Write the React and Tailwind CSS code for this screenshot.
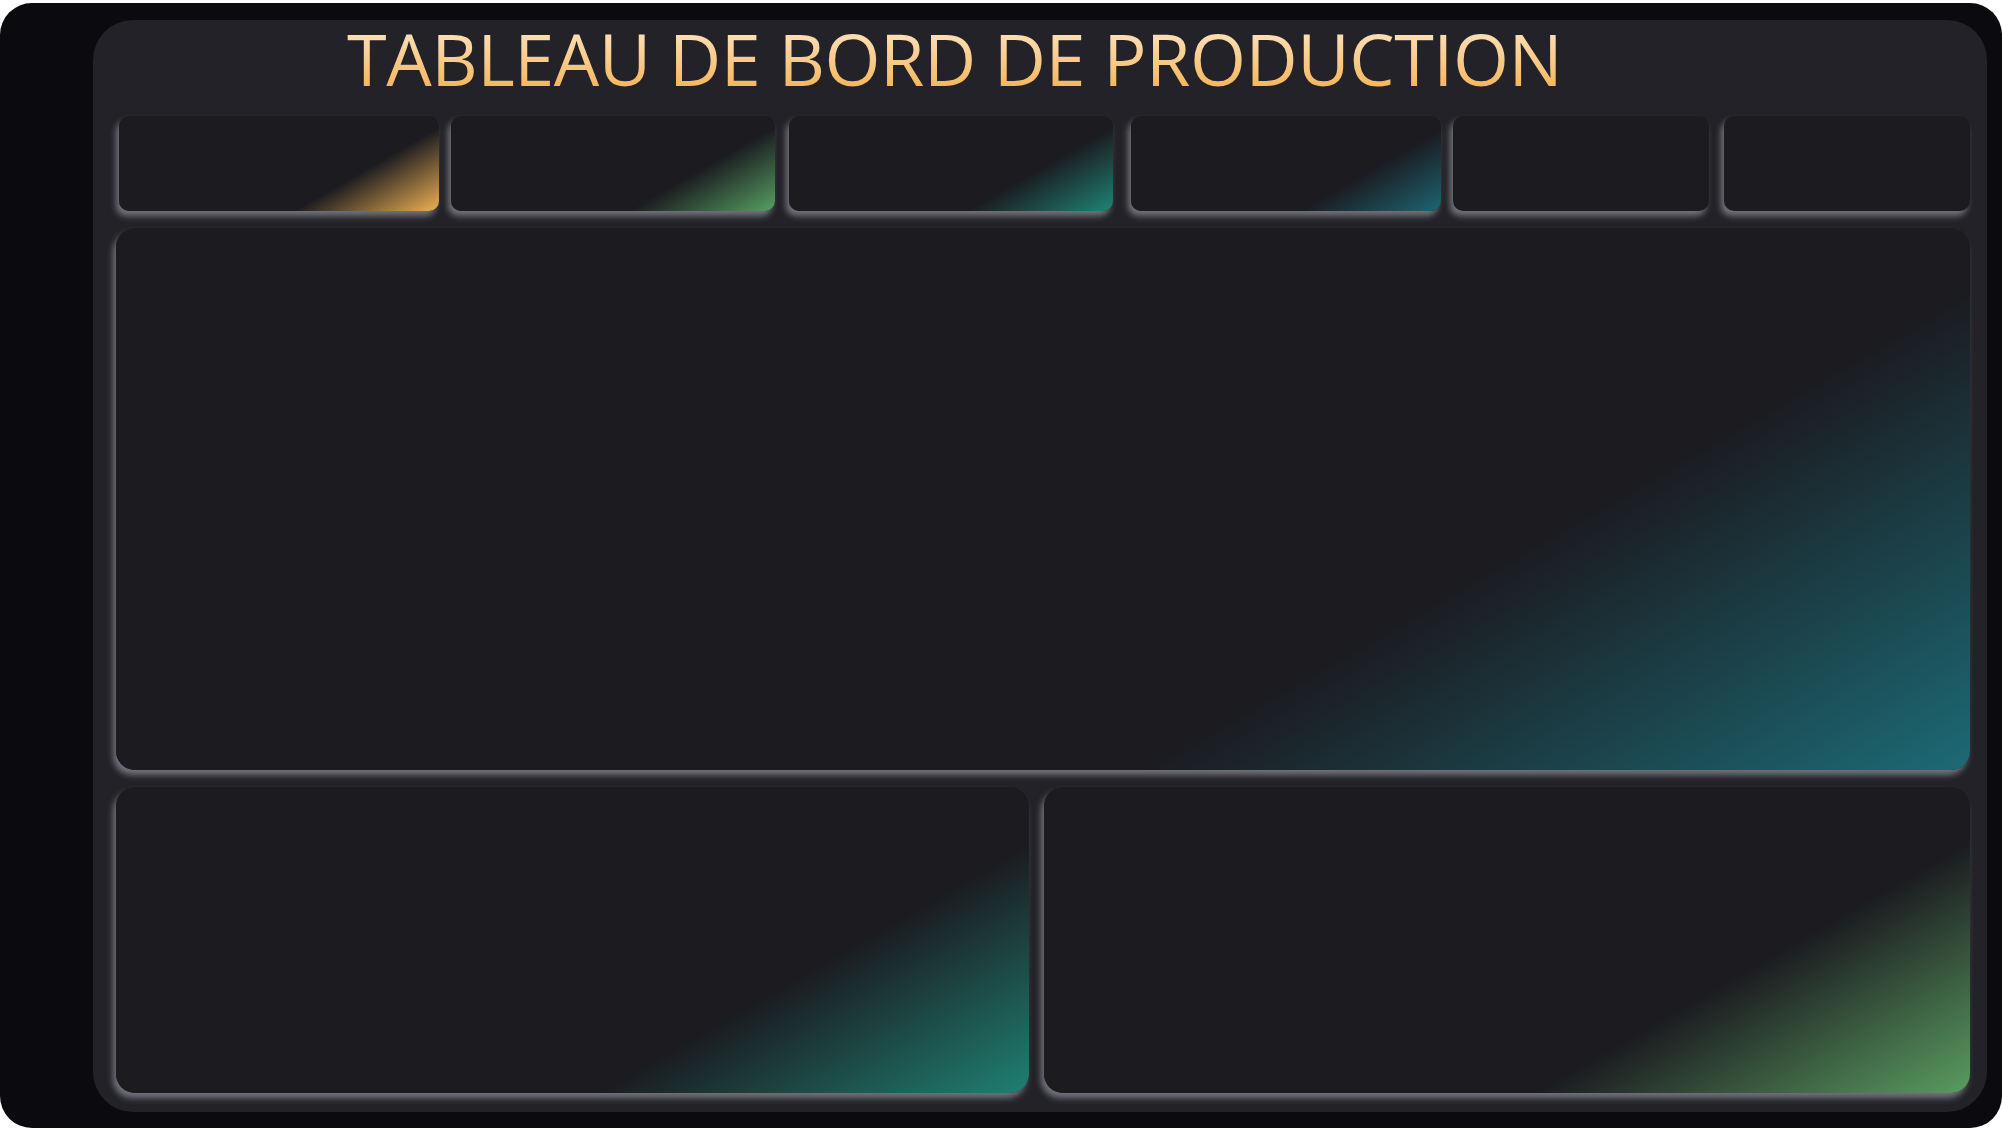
import React from 'react';

const kpis = [
    {w: 'w-[320px] ml-[3px]', bg: 'bg-[linear-gradient(150deg,#1b1b20_70%,#efb153_100%)]'},
    {w: 'w-[324px] ml-[12px]', bg: 'bg-[linear-gradient(150deg,#1b1b20_70%,#56a062_100%)]'},
    {w: 'w-[324px] ml-[14px]', bg: 'bg-[linear-gradient(150deg,#1b1b20_70%,#1f8475_100%)]'},
    {w: 'w-[310px] ml-[18px]', bg: 'bg-[linear-gradient(150deg,#1b1b20_70%,#1d6573_100%)]'},
    {w: 'w-[256px] ml-[12px]', bg: 'bg-[#1b1b20]'},
    {w: 'w-[246px] ml-[15px]', bg: 'bg-[#1b1b20]'},
];

const shadow = 'shadow-[-3px_5px_6px_rgba(150,150,160,0.7)]';

const Card = ({className}) => {
    return <div className={`${className} ${shadow}`} />;
};

const App = () => {
    return (
        <div className="w-full h-[1130px] bg-white pt-[3px]">
            <div className="h-[1125px] w-full rounded-[32px] bg-[#0b0b0f] pl-[93px] pt-[17px] pr-[15px] pb-[16px]">
                <div className="h-full flex flex-col rounded-[40px] bg-[#222228] pl-[23px] pr-[17px] pb-[19px]">
                    {/* title */}
                    <div className="h-[96px] shrink-0 pl-[231px] pt-[2px]">
                        <h1
                            className="text-[72px] leading-none tracking-[-0.5px] font-normal whitespace-nowrap bg-gradient-to-b from-[#fde6c4] to-[#f4b14c] bg-clip-text text-transparent inline-block"
                            style={{fontFamily: '"Open Sans", "Noto Sans", sans-serif'}}
                        >
                            TABLEAU DE BORD DE PRODUCTION
                        </h1>
                    </div>

                    {/* kpi row */}
                    <div className="flex h-[95px] shrink-0">
                        {kpis.map((k, i) => (
                            <Card key={i} className={`${k.w} h-full rounded-[10px] ${k.bg}`} />
                        ))}
                    </div>

                    {/* main chart */}
                    <Card className="mt-[17px] h-[542px] shrink-0 rounded-[19px] bg-[linear-gradient(150deg,#1b1b20_70%,#1c6a75_100%)]" />

                    {/* bottom row */}
                    <div className="mt-[17px] flex flex-1 gap-[15px]">
                        <Card className="w-[913px] rounded-[19px] bg-[linear-gradient(150deg,#1b1b20_70%,#1f8072_100%)]" />
                        <Card className="flex-1 rounded-[19px] bg-[linear-gradient(150deg,#1b1b20_70%,#5a9c60_100%)]" />
                    </div>
                </div>
            </div>
        </div>
    );
};

export default App;
